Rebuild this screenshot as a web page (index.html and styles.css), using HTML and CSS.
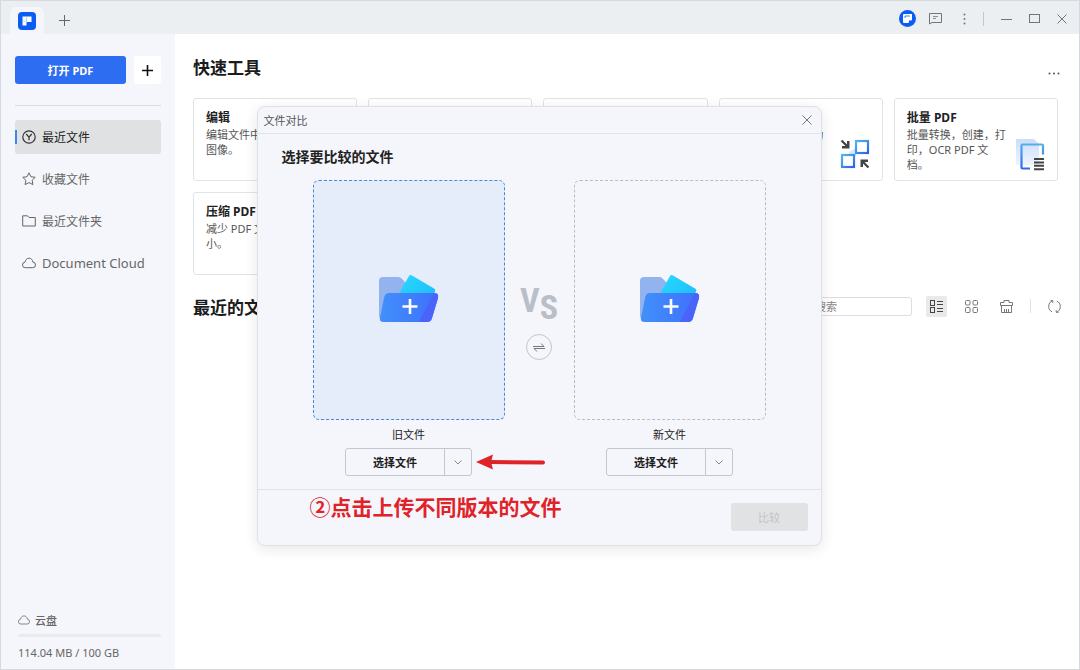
FILE: index.html
```html
<!DOCTYPE html>
<html lang="zh-CN">
<head>
  <meta charset="UTF-8">
  <meta name="viewport" content="width=device-width, initial-scale=1.0">
  <title>文件对比</title>
  <link rel="stylesheet" href="styles.css">
</head>
<body>
  <div class="app">
    <header class="titlebar">
      <div class="tab">
        <svg width="18" height="18" viewBox="0 0 18 18"><rect width="18" height="18" rx="4" fill="#0a5cf5"/><path d="M4.500 4.500h9v5.500H8.500v3.500h-4z" fill="#fff"/><path d="M8.500 5v4.500M5 9h4" stroke="#a9c6ff" stroke-width=".8" fill="none"/></svg>
      </div>
      <button class="icon-btn new-tab" aria-label="新建标签">
        <svg width="11" height="11" viewBox="0 0 11 11"><path d="M5.500 0v11M0 5.500h11" stroke="#666" fill="none"/></svg>
      </button>
      <div class="window-tools">
        <button class="icon-btn" aria-label="账户">
          <svg width="17" height="17" viewBox="0 0 17 17"><circle cx="8.500" cy="8.500" r="8.500" fill="#0a5cf5"/><path d="M4 5a1 1 0 0 1 1-1h8v5.500a1 1 0 0 1-1 1h-2v1.500a1 1 0 0 1-1 1H5a1 1 0 0 1-1-1z" fill="#fff"/><path d="M6 8V6h5" stroke="#0a5cf5" stroke-width=".8" fill="none"/></svg>
        </button>
        <button class="icon-btn feedback" aria-label="反馈">
          <svg width="13" height="13" viewBox="0 0 13 13"><path d="M.5 1.500h12v9H3L.5 12z" stroke="#70757c" fill="none"/><path d="M4 4.500h5M4 6.500h3" stroke="#70757c" stroke-width=".8"/></svg>
        </button>
        <button class="icon-btn" aria-label="更多">
          <svg width="3" height="12" viewBox="0 0 3 12" fill="#70757c"><circle cx="1.500" cy="1.500" r="1"/><circle cx="1.500" cy="6" r="1"/><circle cx="1.500" cy="10.500" r="1"/></svg>
        </button>
        <span class="divider"></span>
        <button class="icon-btn" aria-label="最小化">
          <svg width="11" height="11" viewBox="0 0 11 11"><path d="M0 6.500h11" stroke="#70757c"/></svg>
        </button>
        <button class="icon-btn" aria-label="最大化">
          <svg width="11" height="11" viewBox="0 0 11 11"><rect x=".5" y="1.500" width="10" height="8" stroke="#70757c" fill="none"/></svg>
        </button>
        <button class="icon-btn" aria-label="关闭">
          <svg width="10" height="10" viewBox="0 0 10 10"><path d="M.5.5l9 9M9.500.5l-9 9" stroke="#70757c"/></svg>
        </button>
      </div>
    </header>

    <div class="layout">
      <aside class="sidebar">
        <div class="open-row">
          <button class="open-btn">打开 PDF</button>
          <button class="add-btn" aria-label="新建">
            <svg width="11" height="11" viewBox="0 0 11 11"><path d="M5.500 0v11M0 5.500h11" stroke="#111" stroke-width="1.600" fill="none"/></svg>
          </button>
        </div>
        <nav class="nav">
          <a href="#" class="nav-item active">
            <svg width="14" height="14" viewBox="0 0 14 14" fill="none" stroke="#333" stroke-width="1.200"><circle cx="7" cy="7" r="6.200"/><path d="M4.200 4L7 7.200 9.800 4M7 7v3.300"/></svg>
            最近文件
          </a>
          <a href="#" class="nav-item">
            <svg width="14" height="14" viewBox="0 0 14 14" fill="none" stroke="#666" stroke-linejoin="round"><path d="M7 .8l1.900 3.900 4.300.6-3.100 3 .8 4.300L7 10.600l-3.900 2 .8-4.300-3.100-3 4.300-.6z"/></svg>
            收藏文件
          </a>
          <a href="#" class="nav-item">
            <svg width="14" height="14" viewBox="0 0 14 14" fill="none" stroke="#666" stroke-linejoin="round"><path d="M.7 12V1.800h4.800L7 3.500h6.300V12z"/></svg>
            最近文件夹
          </a>
          <a href="#" class="nav-item">
            <svg width="14" height="14" viewBox="0 0 14 14" fill="none" stroke="#666"><path d="M3.500 11.700a2.800 2.800 0 0 1-.4-5.600C3.500 3.600 5 2.200 7 2.200s3.500 1.400 3.900 3.900a2.800 2.800 0 0 1-.4 5.600z"/></svg>
            <span class="latin">Document Cloud</span>
          </a>
        </nav>
        <div class="storage">
          <div class="storage-title">
            <svg width="12" height="12" viewBox="0 0 14 14" fill="none" stroke="#777"><path d="M3.500 11.700a2.800 2.800 0 0 1-.4-5.600C3.500 3.600 5 2.200 7 2.200s3.500 1.400 3.900 3.900a2.800 2.800 0 0 1-.4 5.600z"/></svg>
            云盘
          </div>
          <div class="storage-bar"></div>
          <div class="storage-text">114.04 MB / 100 GB</div>
        </div>
      </aside>

      <main class="content">
        <div class="section-head">
          <h1>快速工具</h1>
          <button class="icon-btn" aria-label="更多工具">
            <svg width="12" height="3" viewBox="0 0 12 3" fill="#555"><circle cx="1.500" cy="1.500" r="1"/><circle cx="6" cy="1.500" r="1"/><circle cx="10.500" cy="1.500" r="1"/></svg>
          </button>
        </div>

        <div class="tools">
          <a href="#" class="tool">
            <h2>编辑</h2>
            <p>编辑文件中<br>图像。</p>
          </a>
          <a href="#" class="tool" aria-label="转换"></a>
          <a href="#" class="tool" aria-label="对比"></a>
          <a href="#" class="tool">
            <h2>合并</h2>
            <p>将多个 PDF 合并为一个文件。</p>
            <svg class="tool-icon" width="30" height="30" viewBox="0 0 30 30">
              <defs><linearGradient id="blue" x1="0" y1="0" x2="1" y2="1"><stop offset="0" stop-color="#55b5e6"/><stop offset="1" stop-color="#2f62e8"/></linearGradient></defs>
              <path d="M9 13l7-4v8l-5 4z" fill="#d6e8fb"/>
              <rect x="16" y="2" width="12" height="12" fill="#fff" stroke="url(#blue)" stroke-width="2.200"/>
              <rect x="2" y="16" width="12" height="12" fill="#fff" stroke="url(#blue)" stroke-width="2.200"/>
              <path d="M1.500 1.500l6 6M28.500 28.500l-6-6" stroke="#444" stroke-width="2.200"/>
              <path d="M9.500 2v7.500H2V7h3l2-2V2zM20.500 28v-7.500H28V23h-3l-2 2v3z" fill="#444"/>
            </svg>
          </a>
          <a href="#" class="tool">
            <h2>批量 PDF</h2>
            <p>批量转换，创建，打印，OCR PDF 文档。</p>
            <svg class="tool-icon batch" width="30" height="32" viewBox="0 0 30 32">
              <defs><linearGradient id="page" x1="0" y1="0" x2="0" y2="1"><stop offset="0" stop-color="#c9defa"/><stop offset="1" stop-color="#edf4fe"/></linearGradient><linearGradient id="frame" x1="0" y1="0" x2="0" y2="1"><stop offset="0" stop-color="#58abe9"/><stop offset="1" stop-color="#2f69ec"/></linearGradient></defs>
              <path d="M1 0h18l5 5v21H1z" fill="url(#page)"/>
              <path d="M15 29.500H7.500a1 1 0 0 1-1-1V6.500a1 1 0 0 1 1-1H27a1 1 0 0 1 1 1v9" stroke="url(#frame)" stroke-width="2.200" fill="none"/>
              <path d="M19 20h10M19 23.400h10M19 26.800h10M19 30.200h10" stroke="#444" stroke-width="2"/>
            </svg>
          </a>
          <a href="#" class="tool">
            <h2>压缩 PDF</h2>
            <p>减少 PDF 文<br>小。</p>
          </a>
        </div>

        <div class="section-head recent">
          <h1>最近的文件</h1>
          <div class="list-tools">
            <input type="search" class="search" placeholder="搜索" aria-label="搜索">
            <button class="icon-btn view active" aria-label="列表视图">
              <svg width="13" height="13" viewBox="0 0 13 13" fill="none" stroke="#444"><rect x=".5" y=".5" width="4" height="5"/><rect x=".5" y="7.500" width="4" height="5"/><path d="M7 1.500h6M7 4.500h6M7 8.500h6M7 11.500h6"/></svg>
            </button>
            <button class="icon-btn view" aria-label="网格视图">
              <svg width="13" height="13" viewBox="0 0 13 13" fill="none" stroke="#777"><rect x=".5" y=".5" width="4.500" height="4.500" rx="1"/><rect x="8" y=".5" width="4.500" height="4.500" rx="1"/><rect x=".5" y="7.500" width="4.500" height="5" rx="1"/><rect x="8" y="7.500" width="4.500" height="5" rx="1"/></svg>
            </button>
            <button class="icon-btn view" aria-label="清空">
              <svg width="13" height="13" viewBox="0 0 13 13" fill="none" stroke="#777"><path d="M.5 5.500v-3h3.500v-2h5v2h3.500v3zM1.500 5.500v7h10v-7M4.500 12V9M6.500 12V9M8.500 12V9"/></svg>
            </button>
            <span class="divider light"></span>
            <button class="icon-btn view" aria-label="刷新">
              <svg width="13" height="13" viewBox="0 0 13 13" fill="none" stroke="#777"><path d="M4.500.8C1.800 1.700.7 4 .7 6.500s1.300 4.500 3.300 5.300M8.500 12.200c2.700-.9 3.800-3.200 3.800-5.700S11 2 9 1.200M2.500.7h2.300v2.200M10.500 12.300H8.200v-2.200"/></svg>
            </button>
          </div>
        </div>
      </main>
    </div>

    <div class="overlay">
      <section class="dialog" role="dialog" aria-labelledby="dialogTitle">
        <header class="dialog-head">
          <span id="dialogTitle">文件对比</span>
          <button class="icon-btn" aria-label="关闭对话框">
            <svg width="10" height="10" viewBox="0 0 10 10"><path d="M.5.5l9 9M9.500.5l-9 9" stroke="#777"/></svg>
          </button>
        </header>
        <div class="dialog-body">
          <h2>选择要比较的文件</h2>
          <div class="compare">
            <div class="side">
              <button class="drop selected" aria-label="添加旧文件">
                <svg width="60" height="48" viewBox="0 0 60 48">
                  <defs>
                    <linearGradient id="front" x1="0" y1="0" x2="1" y2="0"><stop offset="0" stop-color="#4190fb"/><stop offset="1" stop-color="#3f70fb"/></linearGradient>
                    <linearGradient id="sheet" x1="0" y1="0" x2="1" y2="1"><stop offset="0" stop-color="#29dcff"/><stop offset="1" stop-color="#1cb5fa"/></linearGradient>
                  </defs>
                  <path d="M4 2h15q2 0 3 1l6 6v34H1q-1 0-1-2V6q0-4 4-4z" fill="#93b3ef"/>
                  <path d="M30 1q1-1.500 3-.5l22 13q2 1 1 3L48 32 18 22z" fill="url(#sheet)"/>
                  <path d="M10 18h45q5 0 4 5l-6 20q-1 4-5 4H5q-5 0-4-4l4-20q1-5 5-5z" fill="url(#front)"/>
                  <path d="M55 18q5 0 4 5l-6 20q-1 4-5 4h-8l15-29z" fill="#4a63fa"/>
                  <path d="M31 24v15M23.500 31.500h15" stroke="#fff" stroke-width="2.600"/>
                </svg>
              </button>
              <span class="side-label">旧文件</span>
              <div class="split">
                <button class="split-main">选择文件</button>
                <button class="split-more" aria-label="更多旧文件来源"><svg width="8" height="5" viewBox="0 0 8 5"><path d="M.5.5L4 4 7.500.5" stroke="#888" fill="none"/></svg></button>
                <svg class="arrow" width="69" height="16" viewBox="0 0 69 16"><path d="M14 8L67 8.500" stroke="#e02229" stroke-width="4" stroke-linecap="round"/><path d="M0 8L17 .5l-2 7.500 2 7.500z" fill="#e02229"/></svg>
              </div>
            </div>
            <div class="versus">
              <div class="vs"><span>V</span><span class="vs-low">S</span></div>
              <button class="swap" aria-label="交换文件">
                <svg width="12" height="9" viewBox="0 0 12 9" fill="none" stroke="#777"><path d="M0 3.500h11L8 .5M12 5.500H1l3 3"/></svg>
              </button>
            </div>
            <div class="side">
              <button class="drop" aria-label="添加新文件">
                <svg width="60" height="48" viewBox="0 0 60 48">
                  <path d="M4 2h15q2 0 3 1l6 6v34H1q-1 0-1-2V6q0-4 4-4z" fill="#93b3ef"/>
                  <path d="M30 1q1-1.500 3-.5l22 13q2 1 1 3L48 32 18 22z" fill="url(#sheet)"/>
                  <path d="M10 18h45q5 0 4 5l-6 20q-1 4-5 4H5q-5 0-4-4l4-20q1-5 5-5z" fill="url(#front)"/>
                  <path d="M55 18q5 0 4 5l-6 20q-1 4-5 4h-8l15-29z" fill="#4a63fa"/>
                  <path d="M31 24v15M23.500 31.500h15" stroke="#fff" stroke-width="2.600"/>
                </svg>
              </button>
              <span class="side-label">新文件</span>
              <div class="split">
                <button class="split-main">选择文件</button>
                <button class="split-more" aria-label="更多新文件来源"><svg width="8" height="5" viewBox="0 0 8 5"><path d="M.5.5L4 4 7.500.5" stroke="#888" fill="none"/></svg></button>
              </div>
            </div>
          </div>
        </div>
        <footer class="dialog-foot">
          <p class="note">②点击上传不同版本的文件</p>
          <button class="compare-btn" disabled>比较</button>
        </footer>
      </section>
    </div>
  </div>
</body>
</html>
```

FILE: styles.css
```css
* {
  box-sizing: border-box;
}
body {
  margin: 0;
  font-family: "Noto Sans", "Noto Sans CJK SC", sans-serif;
  font-size: 12px;
  color: #222;
}
h1, h2, p {
  margin: 0;
}
svg {
  display: block;
  flex: none;
}
a {
  color: inherit;
  text-decoration: none;
}
button {
  font-family: inherit;
  padding: 0;
  cursor: pointer;
}
.app {
  position: relative;
  display: flex;
  flex-direction: column;
  min-height: 100vh;
  border: 1px solid #d6d9dd;
  background: #fff;
}
.icon-btn {
  display: flex;
  align-items: center;
  justify-content: center;
  border: none;
  background: none;
}

/* title bar */
.titlebar {
  display: flex;
  height: 33px;
  background: #eceff2;
}
.tab {
  display: flex;
  align-items: center;
  justify-content: center;
  width: 34px;
  margin: 6px 0 0 9px;
  border-radius: 6px 6px 0 0;
  background: #f5f6fb;
}
.new-tab {
  margin: 6px 0 0 15px;
}
.window-tools {
  display: flex;
  align-items: center;
  gap: 17px;
  margin-left: auto;
  padding: 2px 12px 0 0;
}
.feedback {
  margin: 0 4px 0 -4px;
}
.divider {
  width: 1px;
  height: 14px;
  background: #c3c6ca;
}
.divider.light {
  background: #e2e2e2;
}

.layout {
  display: flex;
  flex: 1;
}

/* sidebar */
.sidebar {
  display: flex;
  flex-direction: column;
  width: 174px;
  padding: 22px 14px 8px 14px;
  background: #f5f6fb;
}
.open-row {
  display: flex;
  gap: 8px;
  padding-bottom: 21px;
  border-bottom: 1px solid #d9dbe0;
}
.open-btn {
  flex: 1;
  height: 28px;
  border: none;
  border-radius: 3px;
  background: #2d6df2;
  color: #fff;
  font-size: 11px;
  font-weight: 700;
}
.add-btn {
  display: flex;
  align-items: center;
  justify-content: center;
  width: 27px;
  border: none;
  border-radius: 3px;
  background: #fff;
}
.nav {
  display: flex;
  flex-direction: column;
  gap: 8px;
  padding-top: 14px;
}
.nav-item {
  position: relative;
  display: flex;
  align-items: center;
  gap: 6px;
  height: 34px;
  padding-left: 7px;
  border-radius: 3px;
  color: #666;
}
.nav-item.active {
  background: #e0e1e2;
  color: #222;
}
.nav-item.active::before {
  content: "";
  position: absolute;
  top: 10px;
  left: 0;
  width: 2px;
  height: 14px;
  background: #3d86f0;
}
.latin {
  font-size: 13px;
}
.storage {
  margin-top: auto;
  padding-left: 3px;
  color: #666;
}
.storage-title {
  display: flex;
  align-items: center;
  gap: 5px;
  font-size: 11px;
  font-weight: 500;
}
.storage-bar {
  height: 3px;
  margin: 6px 0 8px;
  border-radius: 2px;
  background: #e9eaed;
}
.storage-text {
  font-size: 11px;
  line-height: 16px;
}

/* main area */
.content {
  flex: 1;
  min-width: 0;
  padding: 18px 21px 20px 18px;
}
.section-head {
  display: flex;
  align-items: center;
  justify-content: space-between;
  height: 28px;
}
.section-head h1 {
  font-size: 17px;
  font-weight: 700;
  color: #1c1c1c;
}
.section-head > .icon-btn {
  width: 12px;
  margin: 14px -2px 0 0;
}
.tools {
  display: grid;
  grid-template-columns: repeat(5, 1fr);
  grid-auto-rows: 83px;
  gap: 11px;
  margin-top: 18px;
}
.tool {
  position: relative;
  padding: 10px 12px;
  border: 1px solid #e2e3e5;
  border-radius: 3px;
}
.tool h2 {
  font-size: 12px;
  font-weight: 700;
  line-height: 18px;
}
.tool p {
  width: fit-content;
  max-width: 100px;
  font-size: 11px;
  line-height: 15px;
  color: #555;
}
.tool-icon {
  position: absolute;
  right: 12px;
  bottom: 11px;
}
.tool-icon.batch {
  bottom: 9px;
}
.recent {
  margin-top: 17px;
}
.list-tools {
  display: flex;
  align-items: center;
  gap: 14px;
  margin-right: -7px;
}
.search {
  width: 120px;
  height: 19px;
  padding: 0 6px 0 22px;
  border: 1px solid #dcdde0;
  border-radius: 3px;
  background: #fff;
  font-family: inherit;
  font-size: 11px;
}
.search::placeholder {
  color: #888;
}
.view {
  width: 21px;
  height: 21px;
  border-radius: 2px;
}
.view.active {
  background: #e9e9e9;
}
.list-tools .divider {
  margin: 0 -1px;
}

/* compare dialog */
.overlay {
  position: absolute;
  inset: 0;
  display: flex;
  align-items: center;
  justify-content: center;
  padding: 0 2px 18px 0;
}
.dialog {
  width: 565px;
  border: 1px solid #dfe1e6;
  border-radius: 8px;
  background: #f5f6fb;
  box-shadow: 0 3px 14px rgba(0, 0, 0, 0.1);
}
.dialog-head {
  display: flex;
  align-items: center;
  justify-content: space-between;
  height: 27px;
  padding: 0 9px 0 6px;
  border-bottom: 1px solid #e2e4e8;
  font-size: 11px;
  color: #555;
}
.dialog-body {
  padding: 13px 24px;
}
.dialog-body h2 {
  font-size: 14px;
  font-weight: 700;
  line-height: 20px;
}
.compare {
  display: flex;
  justify-content: center;
  margin-top: 13px;
}
.side {
  display: flex;
  flex-direction: column;
  align-items: center;
  width: 192px;
}
.drop {
  display: flex;
  align-items: center;
  justify-content: center;
  width: 100%;
  height: 240px;
  padding-bottom: 2px;
  border: 1px dashed #b9bcc3;
  border-radius: 6px;
  background: none;
}
.drop.selected {
  border-color: #4a8ad4;
  background: #e5ecfa;
}
.side-label {
  margin: 6px 0 5px;
  font-size: 11px;
  line-height: 17px;
}
.split {
  position: relative;
  display: flex;
  width: 127px;
  height: 28px;
  border: 1px solid #c3c7ce;
  border-radius: 3px;
}
.split-main {
  flex: 1;
  border: none;
  background: none;
  color: #1c1c1c;
  font-size: 11px;
  font-weight: 700;
}
.split-more {
  display: flex;
  align-items: center;
  justify-content: center;
  width: 27px;
  border: none;
  border-left: 1px solid #c3c7ce;
  background: none;
}
.arrow {
  position: absolute;
  top: 5px;
  left: 130px;
}
.versus {
  display: flex;
  flex-direction: column;
  align-items: center;
  width: 69px;
  padding-top: 100px;
}
.vs {
  display: flex;
  align-items: flex-start;
  font-family: "Roboto Condensed", "Noto Sans Condensed", "Open Sans Condensed", Roboto, sans-serif;
  font-size: 34px;
  font-weight: 700;
  line-height: 40px;
  color: #babec6;
}
.vs-low {
  padding-top: 7px;
}
.swap {
  display: flex;
  align-items: center;
  justify-content: center;
  width: 26px;
  height: 26px;
  margin-top: 7px;
  border: 1px solid #c3c5ca;
  border-radius: 50%;
  background: none;
}
.dialog-foot {
  display: flex;
  align-items: flex-start;
  justify-content: space-between;
  height: 56px;
  padding: 0 13px 0 52px;
  border-top: 1px solid #e2e4e8;
}
.note {
  font-size: 21px;
  font-weight: 700;
  line-height: 34px;
  color: #e02229;
}
.compare-btn {
  width: 77px;
  height: 28px;
  margin-top: 13px;
  border: none;
  border-radius: 3px;
  background: #e1e2e3;
  color: #c3c4c6;
  font-size: 11px;
}
```
